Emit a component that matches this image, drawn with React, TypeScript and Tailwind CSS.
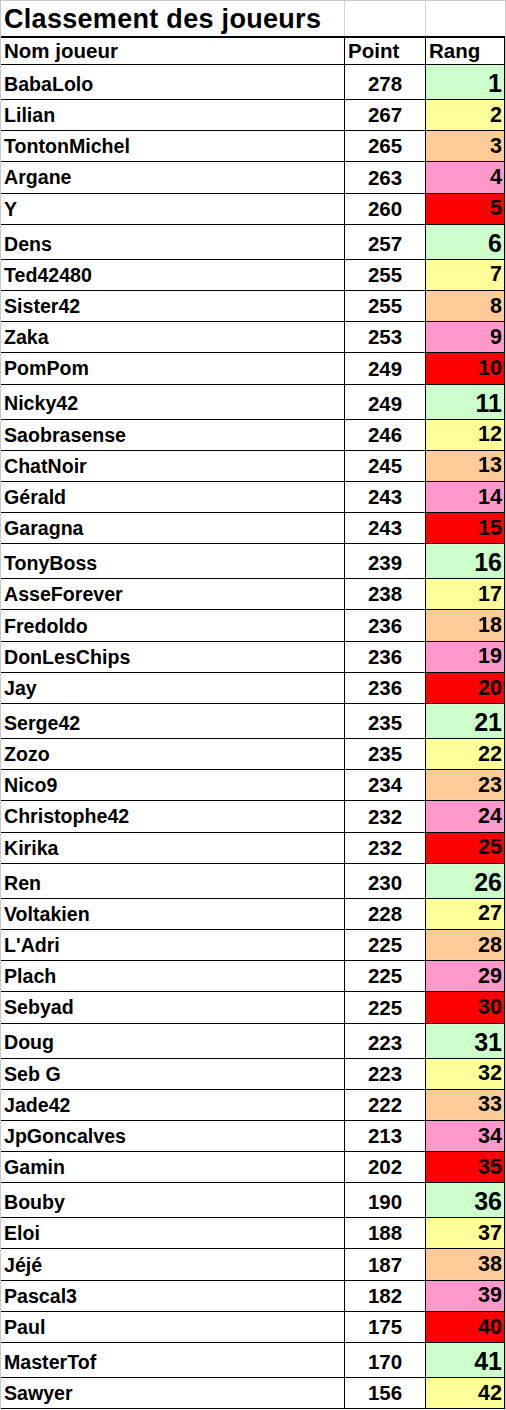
const players: [string, number][] = [
  ["BabaLolo", 278],
  ["Lilian", 267],
  ["TontonMichel", 265],
  ["Argane", 263],
  ["Y", 260],
  ["Dens", 257],
  ["Ted42480", 255],
  ["Sister42", 255],
  ["Zaka", 253],
  ["PomPom", 249],
  ["Nicky42", 249],
  ["Saobrasense", 246],
  ["ChatNoir", 245],
  ["Gérald", 243],
  ["Garagna", 243],
  ["TonyBoss", 239],
  ["AsseForever", 238],
  ["Fredoldo", 236],
  ["DonLesChips", 236],
  ["Jay", 236],
  ["Serge42", 235],
  ["Zozo", 235],
  ["Nico9", 234],
  ["Christophe42", 232],
  ["Kirika", 232],
  ["Ren", 230],
  ["Voltakien", 228],
  ["L'Adri", 225],
  ["Plach", 225],
  ["Sebyad", 225],
  ["Doug", 223],
  ["Seb G", 223],
  ["Jade42", 222],
  ["JpGoncalves", 213],
  ["Gamin", 202],
  ["Bouby", 190],
  ["Eloi", 188],
  ["Jéjé", 187],
  ["Pascal3", 182],
  ["Paul", 175],
  ["MasterTof", 170],
  ["Sawyer", 156],
];

// rank colour cycles every 5 places
const rankBg = ["bg-[#ccffcc]", "bg-[#ffff99]", "bg-[#ffcc99]", "bg-[#ff99cc]", "bg-[#ff0000]"];

export default function App() {
  return (
    <div className="w-[506px] min-h-[1410px] bg-white border-x border-t border-[#c8c8c8] font-['Liberation_Sans',Arial,sans-serif] font-bold text-black">
      {/* title row, plain sheet gridlines */}
      <div className="flex h-[35px]">
        <div className="w-[344px] border-r border-[#d4d4d4] flex items-end pl-[3px] pb-[3.5px] text-[27px] leading-none tracking-[0.3px]">
          Classement des joueurs
        </div>
        <div className="w-[81px] border-r border-[#d4d4d4]" />
        <div className="w-[79px]" />
      </div>

      {/* header */}
      <div className="flex h-[29px] border-t-2 border-b border-black text-[20.5px] leading-none">
        <div className="w-[344px] border-r border-black flex items-end pl-[3px] pb-[3px]">Nom joueur</div>
        <div className="w-[81px] border-r border-black flex items-end pl-[3px] pb-[3px]">Point</div>
        <div className="w-[79px] border-r border-black flex items-end pl-[3px] pb-[3px]">Rang</div>
      </div>

      {players.map(([name, pts], i) => {
        const first = i % 5 === 0;
        return (
          <div
            key={name + i}
            className={`flex border-b border-black ${first ? "h-[35px]" : "h-[31.19px]"}`}
          >
            <div className="w-[344px] border-r border-black flex items-end pl-[3px] pb-[4.5px] text-[19.6px] leading-none">
              {name}
            </div>
            <div className="w-[81px] border-r border-black flex items-end justify-center pb-[4.5px] text-[20.5px] leading-none">
              {pts}
            </div>
            <div
              className={`w-[79px] border-r border-black flex items-end justify-end pr-[2px] leading-none ${rankBg[i % 5]} ${
                first ? "text-[25px] pb-[3px]" : "text-[21.5px] pb-[4px]"
              }`}
            >
              {i + 1}
            </div>
          </div>
        );
      })}
    </div>
  );
}
